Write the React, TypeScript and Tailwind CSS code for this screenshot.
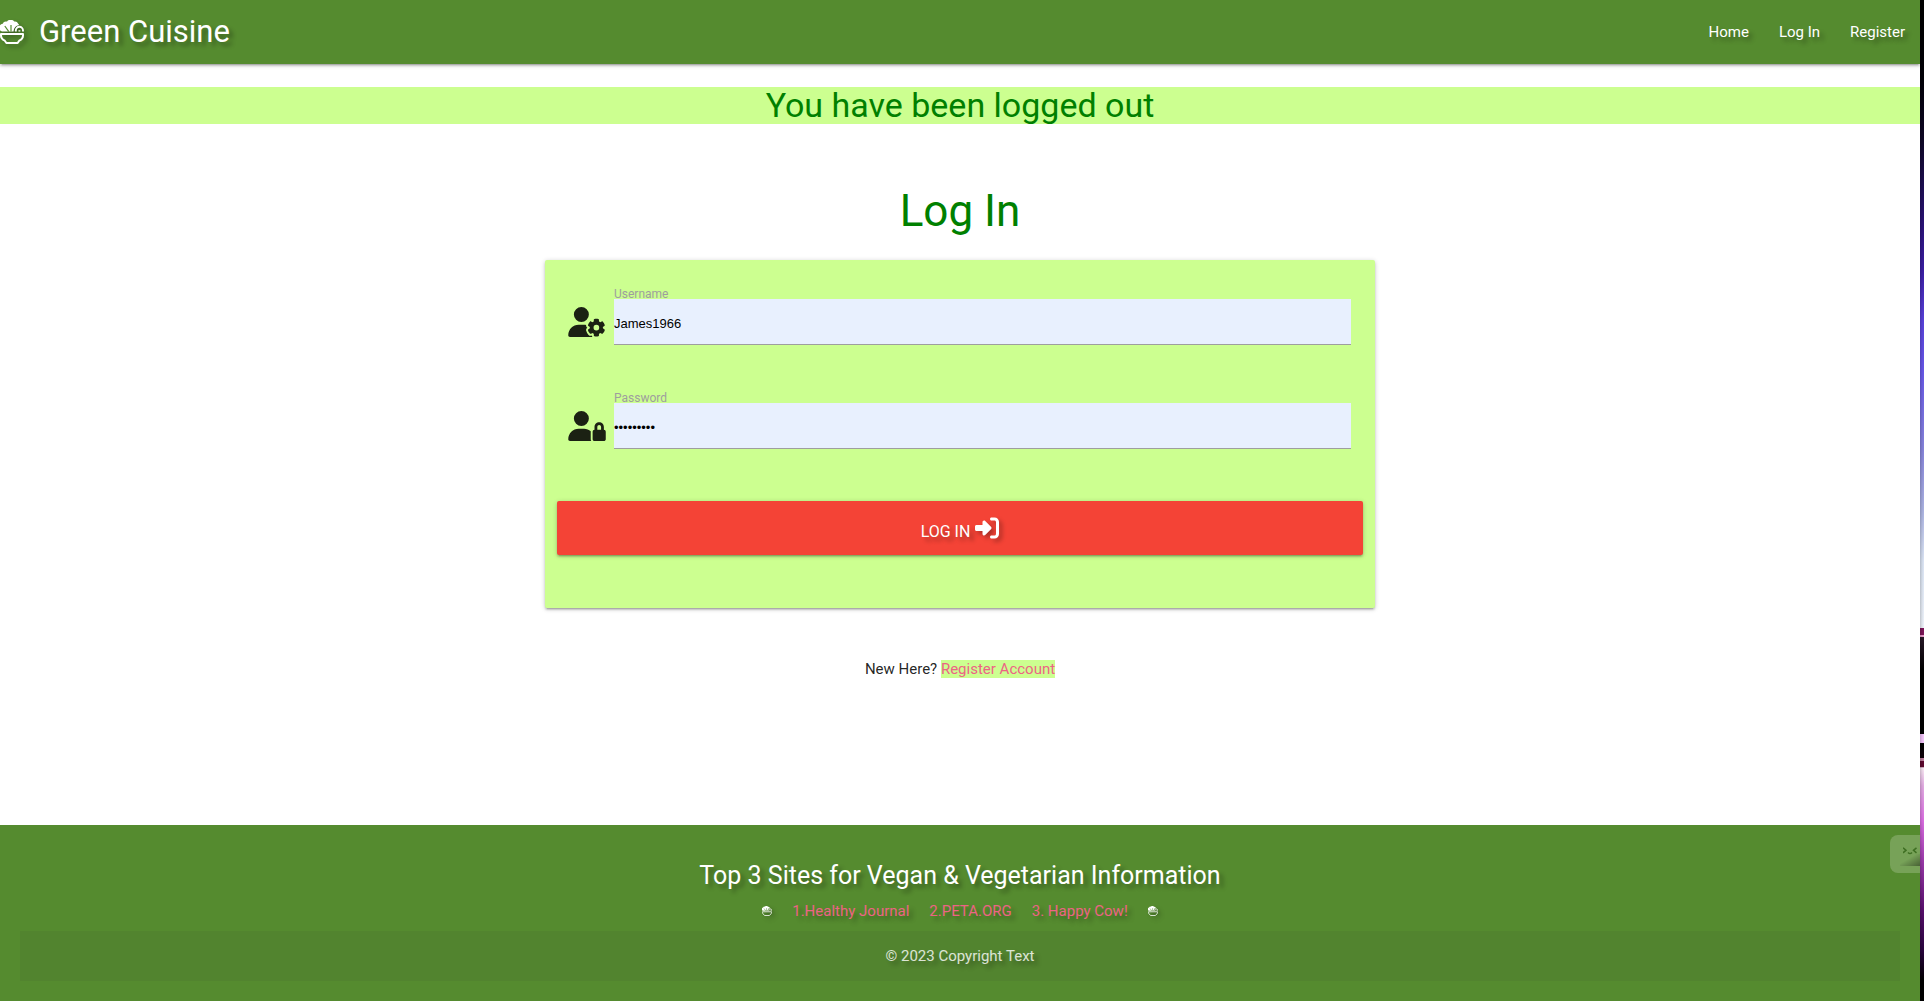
import React from "react";
import { FaUserGear, FaUserLock, FaRightToBracket } from "react-icons/fa6";

function SaladIcon({ className }: { className: string }) {
  return (
    <svg viewBox="0 0 24 24" className={className} aria-hidden="true" fill="none">
      <path
        d="M2.200 11.600A4 4 0 0 1 2.700 3.800 3.600 3.600 0 0 1 7 1.600a4.400 4.400 0 0 1 7.200 0 3.600 3.600 0 0 1 4 2.200c.4.200.7.600.9 1.100A6.200 6.200 0 0 0 13.600 11v.6z"
        fill="currentColor"
      />
      <path d="M4.800 6 8.800 11.600M11 5v6.600" stroke="#558b2f" strokeWidth="1.200" />
      <path d="M15.800 11.600V10.400a3.600 3.600 0 0 1 7.200 0v1.200M19.400 11.600v-1.400" stroke="currentColor" strokeWidth="1.900" />
      <path
        d="M1 13.900h22v1.600c0 2.400-1.500 4.100-3.800 5.200L17.600 23H6.400l-1.600-2.300C2.500 19.600 1 17.900 1 15.500z"
        stroke="currentColor"
        strokeWidth="2"
        strokeLinejoin="round"
      />
    </svg>
  );
}

const navLinks = ["Home", "Log In", "Register"];
const siteLinks = ["1.Healthy Journal", "2.PETA.ORG", "3. Happy Cow!"];

const fields = [
  { id: "username", label: "Username", type: "text", value: "James1966", Icon: FaUserGear },
  { id: "password", label: "Password", type: "password", value: "green1966", Icon: FaUserLock },
];

export default function App() {
  return (
    <div className="flex min-h-screen bg-white font-['Roboto',sans-serif] text-[15px] leading-[22px] text-black/87">
      <div className="relative z-10 flex min-w-0 flex-1 flex-col overflow-x-clip bg-white shadow-[0_0_5px_rgba(0,0,0,0.4)]">
        <header className="flex h-16 items-center justify-between bg-[#558b2f] text-white shadow-[0_2px_2px_0_rgba(0,0,0,0.14),0_3px_1px_-2px_rgba(0,0,0,0.12),0_1px_5px_0_rgba(0,0,0,0.2)] text-shadow-[4px_4px_4px_rgba(0,0,0,0.3)]">
          <a href="#home" className="flex items-center gap-[15px] text-[31px] leading-[62px]">
            <SaladIcon className="size-6 drop-shadow-[3px_3px_2px_rgba(0,0,0,0.3)]" />
            Green Cuisine
          </a>
          <nav className="flex">
            {navLinks.map((label) => (
              <a key={label} href="#" className="px-[15px] leading-[64px]">
                {label}
              </a>
            ))}
          </nav>
        </header>

        <main className="flex flex-1 flex-col pb-[100px]">
          <p className="mt-[23px] bg-[#ccff90] text-center text-[34px] leading-[37px] text-[#008000]">
            You have been logged out
          </p>
          <h1 className="mt-[63px] text-center text-[44px] leading-[48px] text-[#008000]">Log In</h1>

          <form
            onSubmit={(e) => e.preventDefault()}
            className="mx-auto mt-[25px] flex w-full max-w-[830px] flex-col rounded-[2px] bg-[#ccff90] px-3 pt-[29px] pb-[53px] shadow-[0_2px_2px_0_rgba(0,0,0,0.14),0_3px_1px_-2px_rgba(0,0,0,0.12),0_1px_5px_0_rgba(0,0,0,0.2)]"
          >
            {fields.map(({ id, label, type, value, Icon }) => (
              <div key={id} className="mb-[48px] flex pr-3 pl-[11px]">
                <Icon className="mt-[18px] h-[30px] w-[38px] shrink-0" aria-hidden="true" />
                <div className="ml-2 flex min-w-0 flex-1 flex-col">
                  <label htmlFor={id} className="text-[12px] leading-[10px] text-[#9e9e9e]">
                    {label}
                  </label>
                  <input
                    id={id}
                    type={type}
                    defaultValue={value}
                    className="h-[46px] w-full border-b border-[#9e9e9e] bg-[#e8f0fe] pt-[3px] font-['Liberation_Sans',sans-serif] text-[13px] text-black outline-none"
                  />
                </div>
              </div>
            ))}
            <button
              type="submit"
              className="mt-1 flex h-[54px] w-full items-center justify-center gap-[5px] rounded-[2px] bg-[#f44336] text-white shadow-[0_2px_2px_0_rgba(0,0,0,0.14),0_3px_1px_-2px_rgba(0,0,0,0.12),0_1px_5px_0_rgba(0,0,0,0.2)] text-shadow-[4px_4px_4px_rgba(0,0,0,0.3)]"
            >
              <span className="pt-2 text-base">LOG IN</span>
              <FaRightToBracket className="size-6 drop-shadow-[3px_3px_2px_rgba(0,0,0,0.3)]" aria-hidden="true" />
            </button>
          </form>

          <p className="mt-[50px] text-center">
            New Here?{" "}
            <a href="#register" className="bg-[#ccff90] text-[#ec6484]">
              Register Account
            </a>
          </p>
        </main>

        <footer className="relative bg-[#558b2f] px-5 pt-[37px] pb-5 text-center text-white text-shadow-[4px_4px_4px_rgba(0,0,0,0.3)]">
          <h2 className="text-[25px] leading-[28px]">Top 3 Sites for Vegan &amp; Vegetarian Information</h2>
          <div className="mt-[10px] flex items-center justify-center gap-5">
            <SaladIcon className="size-[10px] drop-shadow-[3px_3px_2px_rgba(0,0,0,0.3)]" />
            {siteLinks.map((label) => (
              <a key={label} href="#" className="text-[#ec6484]">
                {label}
              </a>
            ))}
            <SaladIcon className="size-[10px] drop-shadow-[3px_3px_2px_rgba(0,0,0,0.3)]" />
          </div>
          <p className="mt-[9px] bg-[#333333]/8 leading-[50px] text-white/80">© 2023 Copyright Text</p>

          <button
            type="button"
            aria-label="Assistant"
            className="absolute top-[10px] right-0 flex h-[38px] w-[30px] items-start overflow-hidden rounded-l-[8px] bg-white/20 pt-[12px] pl-[13px]"
          >
            <svg viewBox="0 0 14 8" className="h-2 w-[14px]" fill="none" stroke="#3f6f23" strokeWidth="1.500" aria-hidden="true">
              <path d="M0 .8 3 3.300 0 5.800M5 5.500q2 2.200 4 0M13.500.8l-3 2.500 3 2.500" />
            </svg>
            <span className="absolute right-0 bottom-[7px] h-3 w-5 bg-linear-to-br from-transparent from-40% to-black/40" />
          </button>
        </footer>
      </div>

      <div className="w-1 shrink-0 bg-[linear-gradient(to_bottom,#000_0%,#020108_8%,#0f0828_14%,#2d1480_23%,#3c1fa8_27%,#5b43e0_32%,#6a5aee_37%,#8a88e0_45%,#b0b8e8_51%,#e0eafa_56%,#f3f8ff_62.7%,#80155a_62.700%,#80155a_63.4%,#f0a0d0_63.4%,#f0a0d0_63.600%,#2a1a2a_63.6%,#000_67%,#000_73.300%,#f8c8ff_73.300%,#f8c8ff_74.200%,#000_74.200%,#10000a_75.700%,#c080a0_75.700%,#c080a0_76%,#600830_76%,#600830_76.600%,#fff0fa_76.700%,#e8b0e8_78.500%,#e070e8_82%,#a03cb0_86%,#5a1070_91%,#2a0540_95%,#000_98%)]" />
    </div>
  );
}
